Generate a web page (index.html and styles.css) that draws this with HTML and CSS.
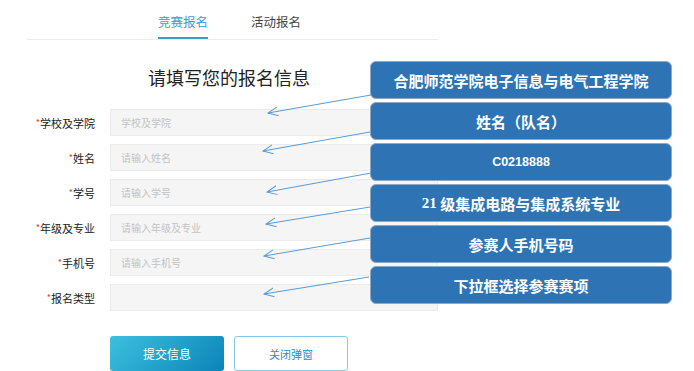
FILE: index.html
```html
<!DOCTYPE html>
<html lang="zh-CN">
<head>
  <meta charset="UTF-8" />
  <meta name="viewport" content="width=device-width, initial-scale=1.0"/>
  <title>报名信息</title>
  <link rel="stylesheet" href="styles.css">
</head>
<body>
  <div class="panel">
    <div class="tabs">
      <span class="tab active">竞赛报名</span>
      <span class="tab">活动报名</span>
    </div>

    <h2 class="title">请填写您的报名信息</h2>

    <form class="form">
      <div class="row">
        <label class="label"><i class="req">*</i>学校及学院</label>
        <input class="field" type="text" placeholder="学校及学院" />
      </div>
      <div class="row">
        <label class="label"><i class="req">*</i>姓名</label>
        <input class="field" type="text" placeholder="请输入姓名" />
      </div>
      <div class="row">
        <label class="label"><i class="req">*</i>学号</label>
        <input class="field" type="text" placeholder="请输入学号" />
      </div>
      <div class="row">
        <label class="label"><i class="req">*</i>年级及专业</label>
        <input class="field" type="text" placeholder="请输入年级及专业" />
      </div>
      <div class="row">
        <label class="label"><i class="req">*</i>手机号</label>
        <input class="field" type="text" placeholder="请输入手机号" />
      </div>
      <div class="row">
        <label class="label"><i class="req">*</i>报名类型</label>
        <div class="field select"></div>
      </div>

      <div class="actions">
        <button type="button" class="btn-submit">提交信息</button>
        <button type="button" class="btn-close">关闭弹窗</button>
      </div>
    </form>
  </div>

  <!-- annotation callouts -->
  <div class="notes">
    <div class="note">合肥师范学院电子信息与电气工程学院</div>
    <div class="note">姓名（队名）</div>
    <div class="note note-code">C0218888</div>
    <div class="note"><span class="num">21</span>&nbsp;级集成电路与集成系统专业</div>
    <div class="note">参赛人手机号码</div>
    <div class="note">下拉框选择参赛赛项</div>
  </div>

  <svg class="arrows" width="694" height="371" viewBox="0 0 694 371">
    <defs>
      <marker id="head" markerUnits="userSpaceOnUse" markerWidth="12" markerHeight="12" refX="10" refY="5" orient="auto">
        <path d="M0,0.5 L10,5 L0,9.5" fill="none" stroke="#5b9bd5" stroke-width="1"/>
      </marker>
    </defs>
    <g stroke="#5b9bd5" stroke-width="1" marker-end="url(#head)">
      <line x1="371" y1="95" x2="268" y2="113"/>
      <line x1="370" y1="132" x2="263" y2="151"/>
      <line x1="371" y1="173" x2="267" y2="192"/>
      <line x1="370" y1="207" x2="266" y2="224"/>
      <line x1="370" y1="238" x2="264" y2="256"/>
      <line x1="369" y1="277" x2="264" y2="294"/>
    </g>
  </svg>
</body>
</html>
```

FILE: styles.css
```css
* {
  margin: 0;
  padding: 0;
  box-sizing: border-box;
}

body {
  font-family: "Noto Sans CJK SC", "Noto Sans", sans-serif;
  background: #fff;
  color: #333;
  width: 694px;
  height: 371px;
  overflow: hidden;
  position: relative;
}

.panel {
  margin-left: 27px;
  width: 411px;
}

/* Tabs */
.tabs {
  display: flex;
  gap: 43px;
  padding-left: 131px;
  border-bottom: 1px solid #ececec;
  height: 40px;
}

.tab {
  font-size: 12.5px;
  line-height: 14px;
  padding-top: 15px;
  color: #444;
  height: 39px;
}

.tab.active {
  color: #2f9fd7;
  border-bottom: 2px solid #2f9fd7;
}

.title {
  font-size: 18px;
  font-weight: 400;
  color: #222;
  line-height: 24px;
  text-align: center;
  padding-right: 7px;
  margin-top: 25px;
  margin-bottom: 20px;
}

/* Form */
.form {
  display: flex;
  flex-direction: column;
  gap: 8px;
}

.row {
  display: flex;
  align-items: center;
  gap: 15px;
}

.label {
  width: 68px;
  text-align: right;
  font-size: 11px;
  color: #222;
}

.req {
  color: #e53935;
  font-style: normal;
  font-size: 9px;
  vertical-align: 2px;
}

.field {
  width: 328px;
  height: 27px;
  background: #f5f5f5;
  border: 1px solid #ebebeb;
  padding-left: 10px;
  font-size: 10px;
  font-family: inherit;
  color: #333;
  outline: none;
}

.field::placeholder {
  color: #c3c3c3;
}

.actions {
  display: flex;
  gap: 10px;
  margin-top: 17px;
  padding-left: 83px;
}

.btn-submit,
.btn-close {
  width: 114px;
  height: 35px;
  border-radius: 3px;
  font-family: inherit;
  cursor: pointer;
}

.btn-submit {
  border: none;
  background: linear-gradient(135deg, #3cc0df 0%, #0b84b8 100%);
  color: #fff;
  font-size: 12px;
}

.btn-close {
  border: 1px solid #86c9ea;
  background: #fff;
  color: #2b8ec4;
  font-size: 11px;
}

/* Annotation layer */
.notes {
  position: absolute;
  left: 370px;
  top: 61px;
  display: flex;
  flex-direction: column;
  gap: 3px;
}

.note {
  width: 302px;
  height: 38px;
  background: #2e74b5;
  border: 1px solid #8ea9c6;
  border-radius: 6px;
  color: #fff;
  font-size: 15px;
  font-weight: 700;
  display: flex;
  align-items: center;
  justify-content: center;
}

.note-code {
  font-family: "Liberation Sans", sans-serif;
  font-size: 12.5px;
}

.num {
  font-family: "Liberation Serif", serif;
}

.arrows {
  position: absolute;
  left: 0;
  top: 0;
  pointer-events: none;
}
```
